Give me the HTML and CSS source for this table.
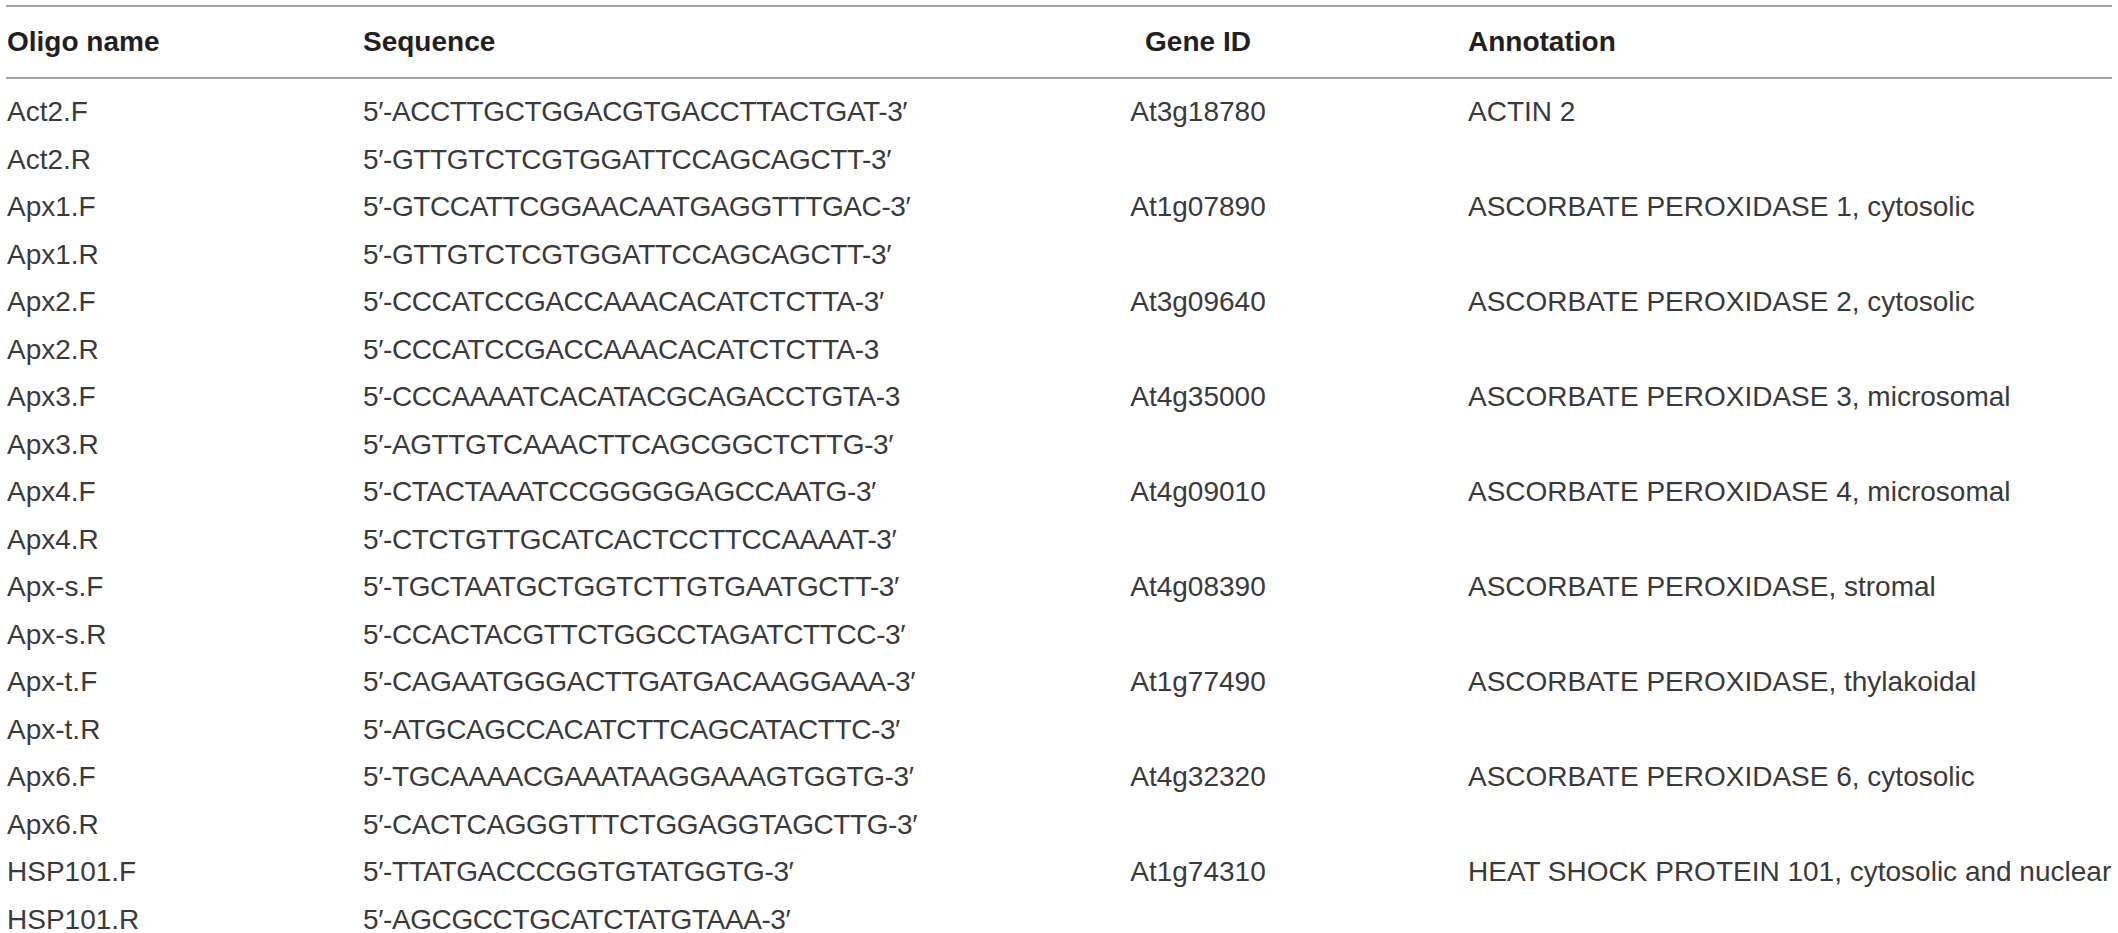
FILE: index.html
```html
<!DOCTYPE html>
<html>
<head>
<meta charset="utf-8">
<link rel="stylesheet" href="styles.css">
</head>
<body>
<table class="oligos">
  <colgroup>
    <col class="c-name"><col class="c-seq"><col class="c-gene"><col class="c-ann">
  </colgroup>
  <thead>
    <tr><th>Oligo name</th><th>Sequence</th><th class="gene">Gene ID</th><th>Annotation</th></tr>
  </thead>
  <tbody>
    <tr class="first"><td>Act2.F</td><td class="seq">5′-ACCTTGCTGGACGTGACCTTACTGAT-3′</td><td class="gene">At3g18780</td><td>ACTIN 2</td></tr>
    <tr><td>Act2.R</td><td class="seq">5′-GTTGTCTCGTGGATTCCAGCAGCTT-3′</td><td class="gene"></td><td></td></tr>
    <tr><td>Apx1.F</td><td class="seq">5′-GTCCATTCGGAACAATGAGGTTTGAC-3′</td><td class="gene">At1g07890</td><td>ASCORBATE PEROXIDASE 1, cytosolic</td></tr>
    <tr><td>Apx1.R</td><td class="seq">5′-GTTGTCTCGTGGATTCCAGCAGCTT-3′</td><td class="gene"></td><td></td></tr>
    <tr><td>Apx2.F</td><td class="seq">5′-CCCATCCGACCAAACACATCTCTTA-3′</td><td class="gene">At3g09640</td><td>ASCORBATE PEROXIDASE 2, cytosolic</td></tr>
    <tr><td>Apx2.R</td><td class="seq">5′-CCCATCCGACCAAACACATCTCTTA-3</td><td class="gene"></td><td></td></tr>
    <tr><td>Apx3.F</td><td class="seq">5′-CCCAAAATCACATACGCAGACCTGTA-3</td><td class="gene">At4g35000</td><td>ASCORBATE PEROXIDASE 3, microsomal</td></tr>
    <tr><td>Apx3.R</td><td class="seq">5′-AGTTGTCAAACTTCAGCGGCTCTTG-3′</td><td class="gene"></td><td></td></tr>
    <tr><td>Apx4.F</td><td class="seq">5′-CTACTAAATCCGGGGGAGCCAATG-3′</td><td class="gene">At4g09010</td><td>ASCORBATE PEROXIDASE 4, microsomal</td></tr>
    <tr><td>Apx4.R</td><td class="seq">5′-CTCTGTTGCATCACTCCTTCCAAAAT-3′</td><td class="gene"></td><td></td></tr>
    <tr><td>Apx-s.F</td><td class="seq">5′-TGCTAATGCTGGTCTTGTGAATGCTT-3′</td><td class="gene">At4g08390</td><td>ASCORBATE PEROXIDASE, stromal</td></tr>
    <tr><td>Apx-s.R</td><td class="seq">5′-CCACTACGTTCTGGCCTAGATCTTCC-3′</td><td class="gene"></td><td></td></tr>
    <tr><td>Apx-t.F</td><td class="seq">5′-CAGAATGGGACTTGATGACAAGGAAA-3′</td><td class="gene">At1g77490</td><td>ASCORBATE PEROXIDASE, thylakoidal</td></tr>
    <tr><td>Apx-t.R</td><td class="seq">5′-ATGCAGCCACATCTTCAGCATACTTC-3′</td><td class="gene"></td><td></td></tr>
    <tr><td>Apx6.F</td><td class="seq">5′-TGCAAAACGAAATAAGGAAAGTGGTG-3′</td><td class="gene">At4g32320</td><td>ASCORBATE PEROXIDASE 6, cytosolic</td></tr>
    <tr><td>Apx6.R</td><td class="seq">5′-CACTCAGGGTTTCTGGAGGTAGCTTG-3′</td><td class="gene"></td><td></td></tr>
    <tr><td>HSP101.F</td><td class="seq">5′-TTATGACCCGGTGTATGGTG-3′</td><td class="gene">At1g74310</td><td>HEAT SHOCK PROTEIN 101, cytosolic and nuclear</td></tr>
    <tr><td>HSP101.R</td><td class="seq">5′-AGCGCCTGCATCTATGTAAA-3′</td><td class="gene"></td><td></td></tr>
  </tbody>
</table>
</body>
</html>
```
FILE: styles.css
```css
html, body {
  margin: 0;
  padding: 0;
  background: #ffffff;
}
body {
  padding: 5px 6px 0 6px;
  font-family: "Liberation Sans", Arial, sans-serif;
  color: #2b2b2b;
}
.oligos {
  border-collapse: separate;
  border-spacing: 0;
  table-layout: fixed;
  width: 2106px;
  font-size: 28px;
}
.c-name { width: 356px; }
.c-seq { width: 567px; }
.c-gene { width: 538px; }
.c-ann { width: 645px; }
.oligos th {
  text-align: left;
  font-weight: bold;
  color: #231f20;
  height: 70px;
  line-height: 70px;
  padding: 0 0 0 1px;
  white-space: nowrap;
  border-top: 2px solid #a3a3a3;
  border-bottom: 2px solid #a3a3a3;
}
.oligos td {
  height: 47.5px;
  line-height: 47.5px;
  padding: 0 0 0 1px;
  white-space: nowrap;
  font-weight: normal;
  color: #3a3a3a;
}
.oligos td.seq {
  letter-spacing: -0.4px;
}
.oligos tr.first td {
  padding-top: 9px;
}
.oligos .gene {
  text-align: center;
  padding-left: 0;
}
```
